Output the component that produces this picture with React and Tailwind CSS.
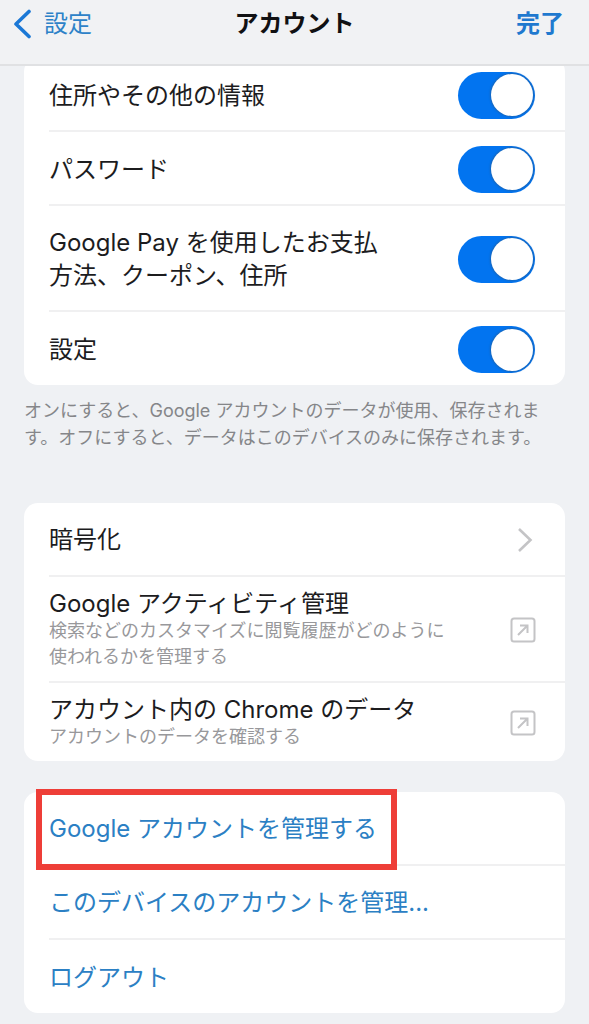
import { useState } from "react";

const syncItems = [
  { id: "address", label: "住所やその他の情報" },
  { id: "password", label: "パスワード" },
  {
    id: "payments",
    label: (
      <>
        Google Pay を使用したお支払
        <br />
        方法、クーポン、住所
      </>
    ),
    tall: true,
  },
  { id: "settings", label: "設定" },
];

function Row({ children, className = "min-h-[74px]" }) {
  return (
    <li className="group relative pl-[25px]">
      <div
        className={
          "flex items-center justify-between border-b-2 border-[#f0f0f1] pt-0.5 group-last:border-b-0 " +
          className
        }
      >
        {children}
      </div>
    </li>
  );
}

function Card({ children, className = "" }) {
  return (
    <ul className={"mx-6 rounded-[14px] bg-white " + className}>{children}</ul>
  );
}

function Toggle({ id }) {
  const [on, setOn] = useState(true);
  return (
    <span className="mr-[30px] grid shrink-0 items-center">
      <input
        id={id}
        type="checkbox"
        role="switch"
        checked={on}
        onChange={(e) => setOn(e.target.checked)}
        className="peer col-start-1 row-start-1 h-[47px] w-[77px] cursor-pointer appearance-none rounded-full bg-[#d8d8dc] checked:bg-[#0274f0]"
      />
      <span className="pointer-events-none col-start-1 row-start-1 ml-[2px] h-[42px] w-[42px] rounded-full bg-white shadow-[0_0_2px_1px_rgba(60,80,100,0.4)] peer-checked:ml-[33px]" />
    </span>
  );
}

function ExternalIcon() {
  return (
    <svg
      width="26"
      height="26"
      viewBox="0 0 26 26"
      fill="none"
      stroke="#c4c4c6"
      strokeWidth="2"
      className="mr-[29px] shrink-0"
      aria-hidden="true"
    >
      <rect x="1.5" y="1.5" width="23" height="23" rx="2.5" />
      <path d="M8 18 17 9M10 8.5h7.5V16" />
    </svg>
  );
}

function ExternalLink({ title, children }) {
  return (
    <a href="#" className="flex flex-1 items-center justify-between">
      <span className="flex flex-col">
        <span className="text-2xl leading-7">{title}</span>
        <span className="text-lg leading-[26px] text-[#98989b]">
          {children}
        </span>
      </span>
      <ExternalIcon />
    </a>
  );
}

export default function App() {
  return (
    <div
      lang="ja"
      className="min-h-screen bg-[#eff1f4] pb-3 font-['Inter','Noto_Sans_CJK_JP',sans-serif] text-2xl text-[#1c1c1e]"
    >
      <header className="sticky top-0 z-10 grid h-[66px] grid-cols-3 items-start border-b-2 border-[#e0e1e3] bg-[#f1f2f4] px-[14px] pt-2 leading-8">
        <a href="#" className="flex items-center gap-[13px] text-[#2d82c8]">
          <svg
            width="17"
            height="30"
            viewBox="0 0 17 30"
            fill="none"
            stroke="#1b78d6"
            strokeWidth="3.6"
            strokeLinecap="round"
            strokeLinejoin="round"
            aria-hidden="true"
          >
            <path d="M15 2.500 2 15 15 27.500" />
          </svg>
          設定
        </a>
        <h1 className="text-center font-bold text-[#111113]">アカウント</h1>
        <button
          type="button"
          className="mr-[11px] cursor-pointer justify-self-end font-bold text-[#1f79cf]"
        >
          完了
        </button>
      </header>

      <main>
        <Card className="-mt-2">
          {syncItems.map((item) => (
            <Row
              key={item.id}
              className={
                item.tall
                  ? "min-h-[106px]"
                  : "min-h-[74px] group-last:min-h-[73px]"
              }
            >
              <label htmlFor={item.id} className="leading-[33px]">
                {item.label}
              </label>
              <Toggle id={item.id} />
            </Row>
          ))}
        </Card>

        <p className="mx-6 mt-3 text-lg leading-[27px] text-[#858689]">
          オンにすると、Google アカウントのデータが使用、保存されま
          <br />
          す。オフにすると、データはこのデバイスのみに保存されます。
        </p>

        <Card className="mt-[52px]">
          <Row className="min-h-[74px]">
            <a href="#" className="flex flex-1 items-center justify-between">
              暗号化
              <svg
                width="16"
                height="26"
                viewBox="0 0 16 26"
                fill="none"
                stroke="#c4c4c6"
                strokeWidth="2.6"
                className="mr-[32px] shrink-0"
                aria-hidden="true"
              >
                <path d="M2 2 13.500 13 2 24" />
              </svg>
            </a>
          </Row>
          <Row className="min-h-[106px]">
            <ExternalLink title="Google アクティビティ管理">
              検索などのカスタマイズに閲覧履歴がどのように
              <br />
              使われるかを管理する
            </ExternalLink>
          </Row>
          <Row className="min-h-[78px]">
            <ExternalLink title="アカウント内の Chrome のデータ">
              アカウントのデータを確認する
            </ExternalLink>
          </Row>
        </Card>

        <Card className="mt-[31px] text-[#2b80c4]">
          <Row>
            <a href="#">Google アカウントを管理する</a>
            <span className="pointer-events-none absolute -top-[3px] left-3 h-[81px] w-[361px] border-[6px] border-[#ee3e38]" />
          </Row>
          <Row>
            <button type="button" className="cursor-pointer">
              このデバイスのアカウントを管理...
            </button>
          </Row>
          <Row className="min-h-[73px]">
            <button type="button" className="cursor-pointer">
              ログアウト
            </button>
          </Row>
        </Card>
      </main>
    </div>
  );
}
